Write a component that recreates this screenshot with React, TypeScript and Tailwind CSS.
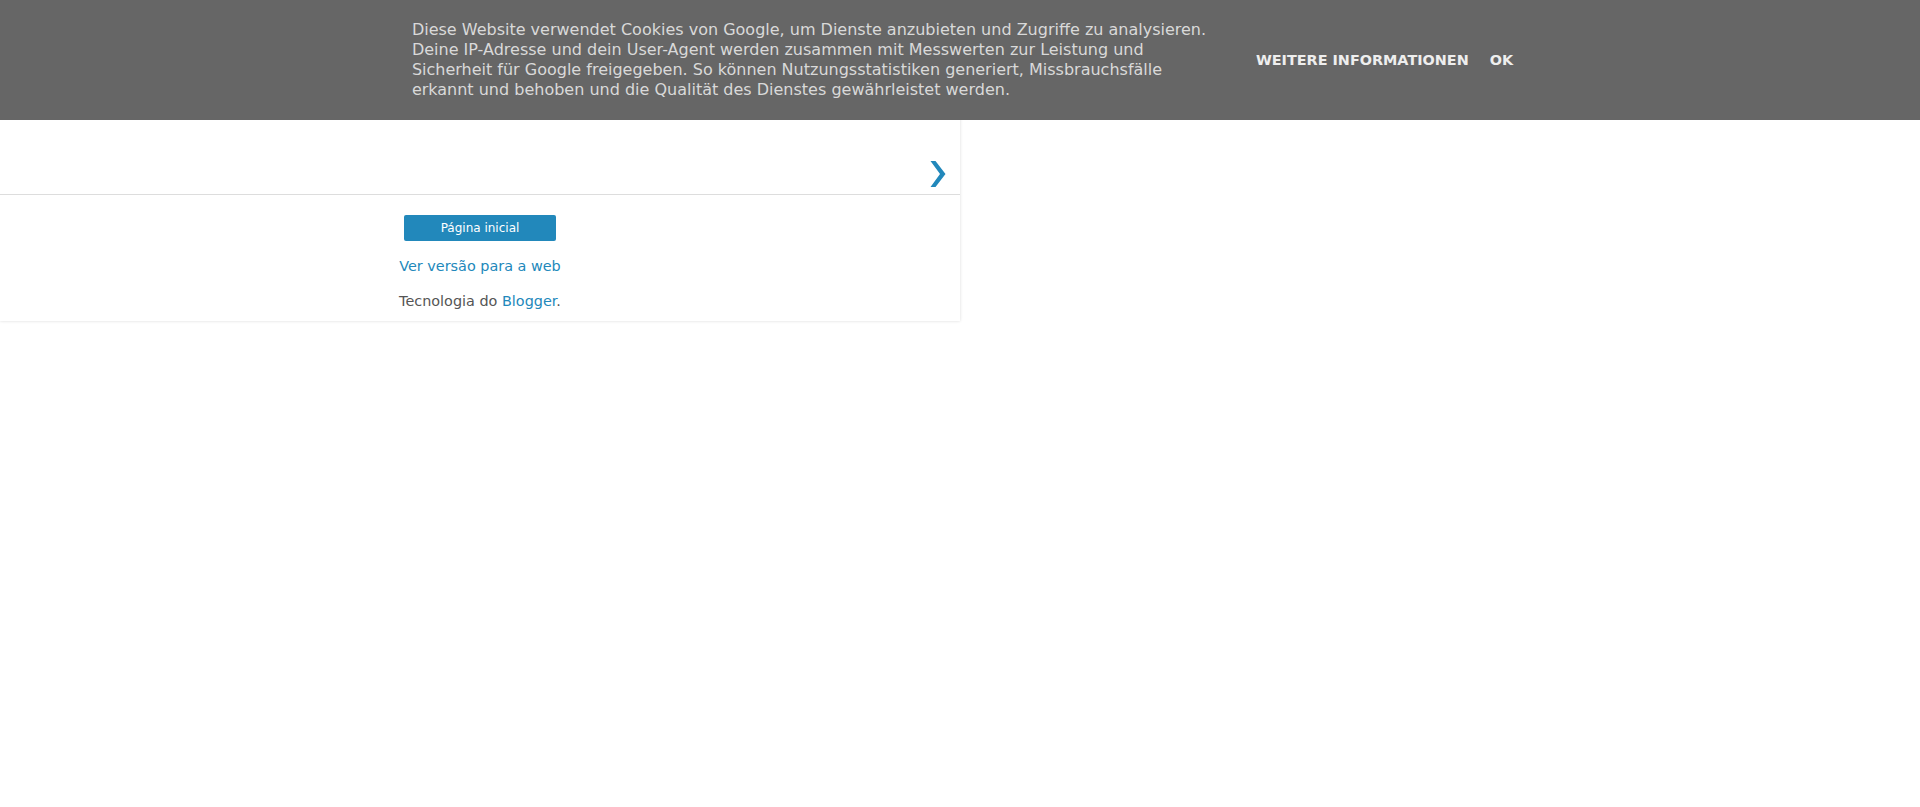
import React from "react";

const BLUE = "#2288bb";

function NextArrow() {
  return (
    <svg width="16" height="26" viewBox="0 0 16 26" aria-hidden="true">
      <polygon points="0.5,0 5.5,0 15.5,13 5.5,26 0.5,26 10,13" fill={BLUE} />
    </svg>
  );
}

function CookieBar() {
  return (
    <div className="absolute left-0 right-0 top-0 z-10 flex h-[120px] items-center justify-center bg-[#666666] pl-[5px]">
      <span className="w-[800px] text-[16px] leading-[20px] text-[#d9d9d9]">
        Diese Website verwendet Cookies von Google, um Dienste anzubieten und Zugriffe zu analysieren.
        <br />
        Deine IP-Adresse und dein User-Agent werden zusammen mit Messwerten zur Leistung und
        <br />
        Sicherheit für Google freigegeben. So können Nutzungsstatistiken generiert, Missbrauchsfälle
        <br />
        erkannt und behoben und die Qualität des Dienstes gewährleistet werden.
      </span>
      <div className="ml-[44px] flex items-center gap-[21px] text-[14.4px] font-bold leading-[20px] text-[#eeeeee]">
        <a href="#" className="uppercase">
          Weitere Informationen
        </a>
        <a href="#" className="uppercase">
          OK
        </a>
      </div>
    </div>
  );
}

export default function App() {
  return (
    <div
      className="relative min-h-[807px] bg-white"
      style={{ fontFamily: '"DejaVu Sans", "Noto Sans", sans-serif' }}
    >
      <CookieBar />

      <div className="w-[960px] bg-white shadow-[0_0_3px_rgba(0,0,0,0.15)]">
        <div className="flex h-[194px] items-end justify-end pb-[7px] pr-[14px]">
          <a href="#" title="Postagem mais recente">
            <NextArrow />
          </a>
        </div>
        <div className="border-t border-[#dddddd] pb-[10px] pt-[20px] text-center text-[14.4px] leading-[20px] text-[#555555]">
          <a
            href="#"
            className="mx-auto flex h-[26px] w-[152px] items-center justify-center rounded-[2px] text-[12px] text-white"
            style={{ backgroundColor: BLUE }}
          >
            Página inicial
          </a>
          <div className="mt-[15px]">
            <a href="#" className="text-[#2288bb]">
              Ver versão para a web
            </a>
          </div>
          <div className="mt-[15px]">
            Tecnologia do{" "}
            <a href="#" className="text-[#2288bb]">
              Blogger
            </a>
            .
          </div>
        </div>
      </div>
    </div>
  );
}
